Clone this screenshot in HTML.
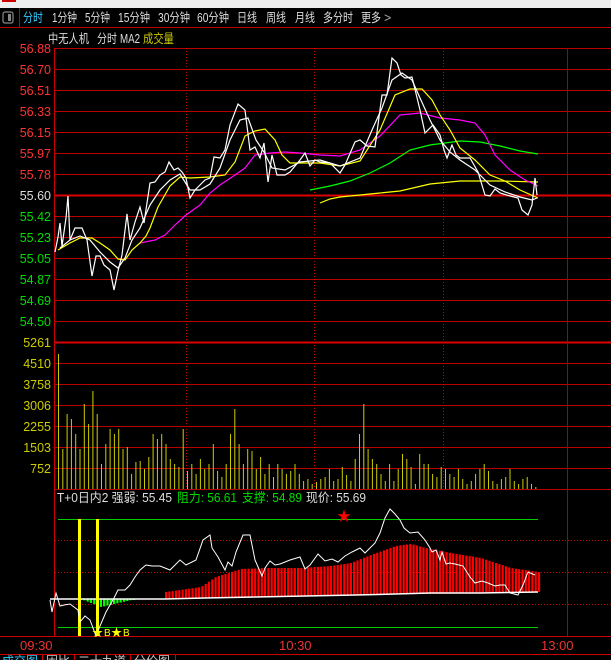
<!DOCTYPE html><html><head><meta charset="utf-8"><style>
body{margin:0;background:#000;width:611px;height:660px;overflow:hidden;font-family:"Liberation Sans","Noto Sans CJK SC",sans-serif}
svg{position:absolute;left:0;top:0}
</style></head><body>
<svg id="s" width="611" height="660" xmlns="http://www.w3.org/2000/svg" font-family="Liberation Sans, Noto Sans CJK SC, sans-serif">
<rect x="0" y="0" width="611" height="8" fill="#eee"/>
<rect x="2" y="0" width="14" height="2" fill="#c00"/>
<rect x="3" y="12" width="10" height="11" rx="2" fill="none" stroke="#888" stroke-width="1.2"/>
<rect x="8" y="14" width="3" height="7" fill="#888"/>
<line x1="19.5" y1="8" x2="19.5" y2="27" stroke="#c00"/>
<line x1="0" y1="27.5" x2="611" y2="27.5" stroke="#b00"/>
<g font-size="12.5" fill="#ddd" lengthAdjust="spacingAndGlyphs">
<text x="23" y="22" fill="#3cf" textLength="20" lengthAdjust="spacingAndGlyphs">分时</text>
<text x="52" y="22" textLength="25" lengthAdjust="spacingAndGlyphs">1分钟</text>
<text x="85" y="22" textLength="25" lengthAdjust="spacingAndGlyphs">5分钟</text>
<text x="118" y="22" textLength="32" lengthAdjust="spacingAndGlyphs">15分钟</text>
<text x="158" y="22" textLength="32" lengthAdjust="spacingAndGlyphs">30分钟</text>
<text x="197" y="22" textLength="32" lengthAdjust="spacingAndGlyphs">60分钟</text>
<text x="237" y="22" textLength="20" lengthAdjust="spacingAndGlyphs">日线</text>
<text x="266" y="22" textLength="20" lengthAdjust="spacingAndGlyphs">周线</text>
<text x="295" y="22" textLength="20" lengthAdjust="spacingAndGlyphs">月线</text>
<text x="323" y="22" textLength="30" lengthAdjust="spacingAndGlyphs">多分时</text>
<text x="361" y="22" textLength="20" lengthAdjust="spacingAndGlyphs">更多</text>
<text x="384" y="22" fill="#aaa">&gt;</text>
</g>
<g font-size="12.5" fill="#ddd"><text x="48" y="43" textLength="41" lengthAdjust="spacingAndGlyphs">中无人机</text><text x="97" y="43" textLength="20" lengthAdjust="spacingAndGlyphs">分时</text><text x="120" y="43" textLength="20" lengthAdjust="spacingAndGlyphs">MA2</text><text x="143" y="43" fill="#cc0" textLength="31" lengthAdjust="spacingAndGlyphs">成交量</text></g>
<g id="grid"></g>
<line x1="54.5" y1="48" x2="54.5" y2="636" stroke="#c00"/>
<line x1="567.5" y1="48" x2="567.5" y2="636" stroke="#a00"/>
<line x1="0" y1="636.5" x2="611" y2="636.5" stroke="#c00"/>
<line x1="0" y1="654.5" x2="611" y2="654.5" stroke="#c00"/>
<g stroke="#c00" stroke-dasharray="1,2"><line x1="186.5" y1="48" x2="186.5" y2="489"/><line x1="314.5" y1="48" x2="314.5" y2="489"/><line x1="443.5" y1="48" x2="443.5" y2="489"/></g>
<g id="vol" fill="#cc0"></g>
<g fill="none" stroke-width="1.2">
<polyline stroke="#ff0" points="320,203 330,199 340,197 360,195 380,193 400,191 430,184 460,181 500,181 538,182"/>
<polyline stroke="#0f0" points="310,190 330,186 350,181 370,173 390,163 410,150 430,145 460,141 480,142 500,146 520,151 538,154"/>
<polyline stroke="#f0f" points="140,243 155,240 165,235 175,225 186,215 200,205 210,193 220,185 235,175 245,168 255,155 270,153 285,152 300,153 320,155 340,156 360,150 380,136 400,115 420,113 440,118 460,120 475,123 485,135 495,155 510,170 525,180 538,186"/>
<polyline stroke="#ff0" points="58,250 70,243 80,238 92,238 100,243 110,250 118,259 125,260 132,250 140,243 146,236 150,228 158,207 170,186 180,177 190,178 210,177 225,175 235,162 245,136 255,131 265,129 275,140 282,155 290,163 300,163 320,163 340,166 360,161 380,130 395,95 410,89 422,89 432,100 440,115 450,130 460,148 475,160 490,175 505,181 520,190 538,198"/>
<polyline stroke="#fff" points="55,252 58,237 60,223 62,246 66,218 68,196 70,240 75,228 82,228 87,240 92,276 96,256 100,256 104,265 110,270 114,290 118,271 122,255 127,214 130,240 135,222 140,207 144,223 150,183 155,182 160,175 165,172 169,162 174,170 178,168 182,172 186,178 190,198 195,190 200,185 205,180 210,178 214,157 220,158 225,150 230,125 238,104 245,110 250,150 255,147 260,158 264,143 268,182 272,155 277,175 285,175 290,172 300,160 305,153 310,166 315,160 320,162 330,163 340,173 345,165 355,142 360,140 367,146 375,147 382,95 387,95 392,58 397,63 401,75 405,78 412,77 420,110 425,133 433,125 440,135 444,150 447,158 452,145 456,155 460,158 470,158 478,172 485,195 490,196 495,189 500,193 510,196 518,198 522,210 528,215 532,205 535,178 537,195"/>
<polyline stroke="#fff" points="60,248 70,240 80,236 90,240 100,252 110,262 118,268 125,258 132,240 140,228 150,205 160,190 170,180 180,174 190,190 200,190 210,184 220,168 230,140 240,120 248,118 256,140 264,152 272,168 285,170 300,162 320,160 340,166 360,158 372,130 382,108 392,80 402,73 412,80 420,98 430,120 440,140 450,152 460,160 475,170 490,185 505,192 520,197 532,200 537,198"/>
</g>
<g font-size="12.5" text-anchor="end" id="lab"></g>
<g font-size="12.5" fill="#ddd"><text x="57" y="502" textLength="115" lengthAdjust="spacingAndGlyphs">T+0日内2 强弱: 55.45</text><text x="177" y="502" fill="#0d0" textLength="60" lengthAdjust="spacingAndGlyphs">阻力: 56.61</text><text x="242" y="502" fill="#0d0" textLength="60" lengthAdjust="spacingAndGlyphs">支撑: 54.89</text><text x="306" y="502" textLength="60" lengthAdjust="spacingAndGlyphs">现价: 55.69</text></g>
<g stroke="#0c0"><line x1="58" y1="519.5" x2="538" y2="519.5"/><line x1="58" y1="627.5" x2="538" y2="627.5"/></g>
<g stroke="#c00" stroke-dasharray="1,2"><line x1="55" y1="540.5" x2="611" y2="540.5"/><line x1="55" y1="572.5" x2="611" y2="572.5"/><line x1="55" y1="604.5" x2="611" y2="604.5"/></g>
<g id="ind"></g>
<polyline fill="none" stroke="#fff" stroke-width="1.5" points="50,599 165,599 205,598 255,597 305,596 355,595 395,594 430,593 480,593 538,592"/>
<rect x="78" y="519" width="3" height="117" fill="#ff0"/><rect x="96" y="519" width="3" height="117" fill="#ff0"/>
<polyline fill="none" stroke="#fff" stroke-width="1" points="50,600 52,612 56,593 60,606 64,605 70,604 78,610 80,622 85,616 90,620 96,636 100,626 106,612 114,598 118,590 125,590 130,585 135,577 140,570 146,565 152,566 160,566 170,570 180,560 186,565 196,560 203,540 210,535 212,548 218,557 225,570 228,562 232,566 236,552 243,535 250,535 255,560 262,576 265,568 270,561 275,565 280,564 290,560 300,557 305,569 310,565 318,554 325,561 332,559 338,562 345,556 352,552 360,548 365,553 375,543 380,533 385,518 390,509 395,514 400,520 404,528 410,533 418,532 425,540 430,548 432,552 436,550 440,560 442,552 446,564 450,563 455,564 463,566 470,577 475,583 482,581 488,583 495,586 500,585 505,585 510,593 518,595 523,585 528,572 535,575"/>
<g font-size="11" fill="#ff0"><text x="92" y="636">★</text><text x="111" y="636">★</text><text x="104" y="636" font-size="10">B</text><text x="123" y="636" font-size="10">B</text></g>
<text x="337" y="521" font-size="14" fill="#f00">★</text>
<g font-size="13" fill="#e33"><text x="20" y="650">09:30</text><text x="279" y="650">10:30</text><text x="541" y="650">13:00</text></g>
<g font-size="12" fill="#ccc"><text x="2" y="665" fill="#3cf">成交图</text><text x="46" y="665">因比</text><text x="78" y="665">二十九道</text><text x="134" y="665">分价图</text></g>
<g stroke="#c00"><line x1="42.5" y1="655" x2="42.5" y2="660"/><line x1="74.5" y1="655" x2="74.5" y2="660"/><line x1="130.5" y1="655" x2="130.5" y2="660"/><line x1="175.5" y1="655" x2="175.5" y2="660"/></g>
</svg>
<script>
(function(){
var N="http://www.w3.org/2000/svg";function el(p,t,a){var e=document.createElementNS(N,t);for(var k in a)e.setAttribute(k,a[k]);document.getElementById(p).appendChild(e);return e;}
var ys=[48,69,90,111,132,153,174,195,216,237,258,279,300,321,342,363,384,405,426,447,468,489];
ys.forEach(function(y,i){el("grid","line",{x1:55,x2:611,y1:y+.5,y2:y+.5,stroke:(i==7||i==14)?"#d00":"#b00","stroke-width":(i==7||i==14)?2:1});});
var L=[["56.88","#f33"],["56.70","#f33"],["56.51","#f33"],["56.33","#f33"],["56.15","#f33"],["55.97","#f33"],["55.78","#f33"],["55.60","#ddd"],["55.42","#0d0"],["55.23","#0d0"],["55.05","#0d0"],["54.87","#0d0"],["54.69","#0d0"],["54.50","#0d0"],["5261","#cc0"],["4510","#cc0"],["3758","#cc0"],["3006","#cc0"],["2255","#cc0"],["1503","#cc0"],["752","#cc0"]];
L.forEach(function(l,i){var t=el("lab","text",{x:51,y:ys[i]+5,fill:l[1]});t.textContent=l[0];});
var h=[135,40,75,70,55,40,85,65,98,75,25,45,60,55,60,40,42,15,27,28,20,32,55,50,55,45,30,25,22,60,18,25,15,30,20,25,45,18,12,25,55,80,45,25,40,38,20,32,15,25,12,25,20,15,18,25,15,8,10,5,7,10,12,20,8,10,22,14,8,30,55,85,40,30,25,15,8,25,8,20,35,30,22,5,35,25,25,15,12,22,20,15,12,20,10,5,8,15,20,25,18,8,5,10,12,20,8,5,10,12,5,2];
for(var i=0;i<h.length;i++){var x=58+i*4.3;if(x>538)break;el("vol","rect",{x:x,y:489-h[i],width:1,height:h[i]});}
var rt=[[165,592],[200,587],[215,577],[240,569],[265,568],[300,568],[330,566],[350,563],[370,555],[395,546],[410,544],[425,548],[450,553],[480,558],[510,568],[538,572]];
function tp(x){for(var j=0;j<rt.length-1;j++){if(x<=rt[j+1][0]){var a=rt[j],b=rt[j+1];return a[1]+(b[1]-a[1])*(x-a[0])/(b[0]-a[0]);}}return 572;}
function bs(x){return 599-(x-140)*7/400;}
for(var x=165;x<=538;x+=3.3){var t=tp(x),b=bs(x);el("ind","rect",{x:x,y:t,width:2.2,height:Math.max(1,b-t),fill:"#f00"});}
for(var x=80;x<=135;x+=3.3){var d=x<100?(x-80)*0.4:(135-x)*0.23;el("ind","rect",{x:x,y:599,width:2.2,height:Math.max(1,d),fill:"#0f0"});}
})();
</script>
</body></html>
